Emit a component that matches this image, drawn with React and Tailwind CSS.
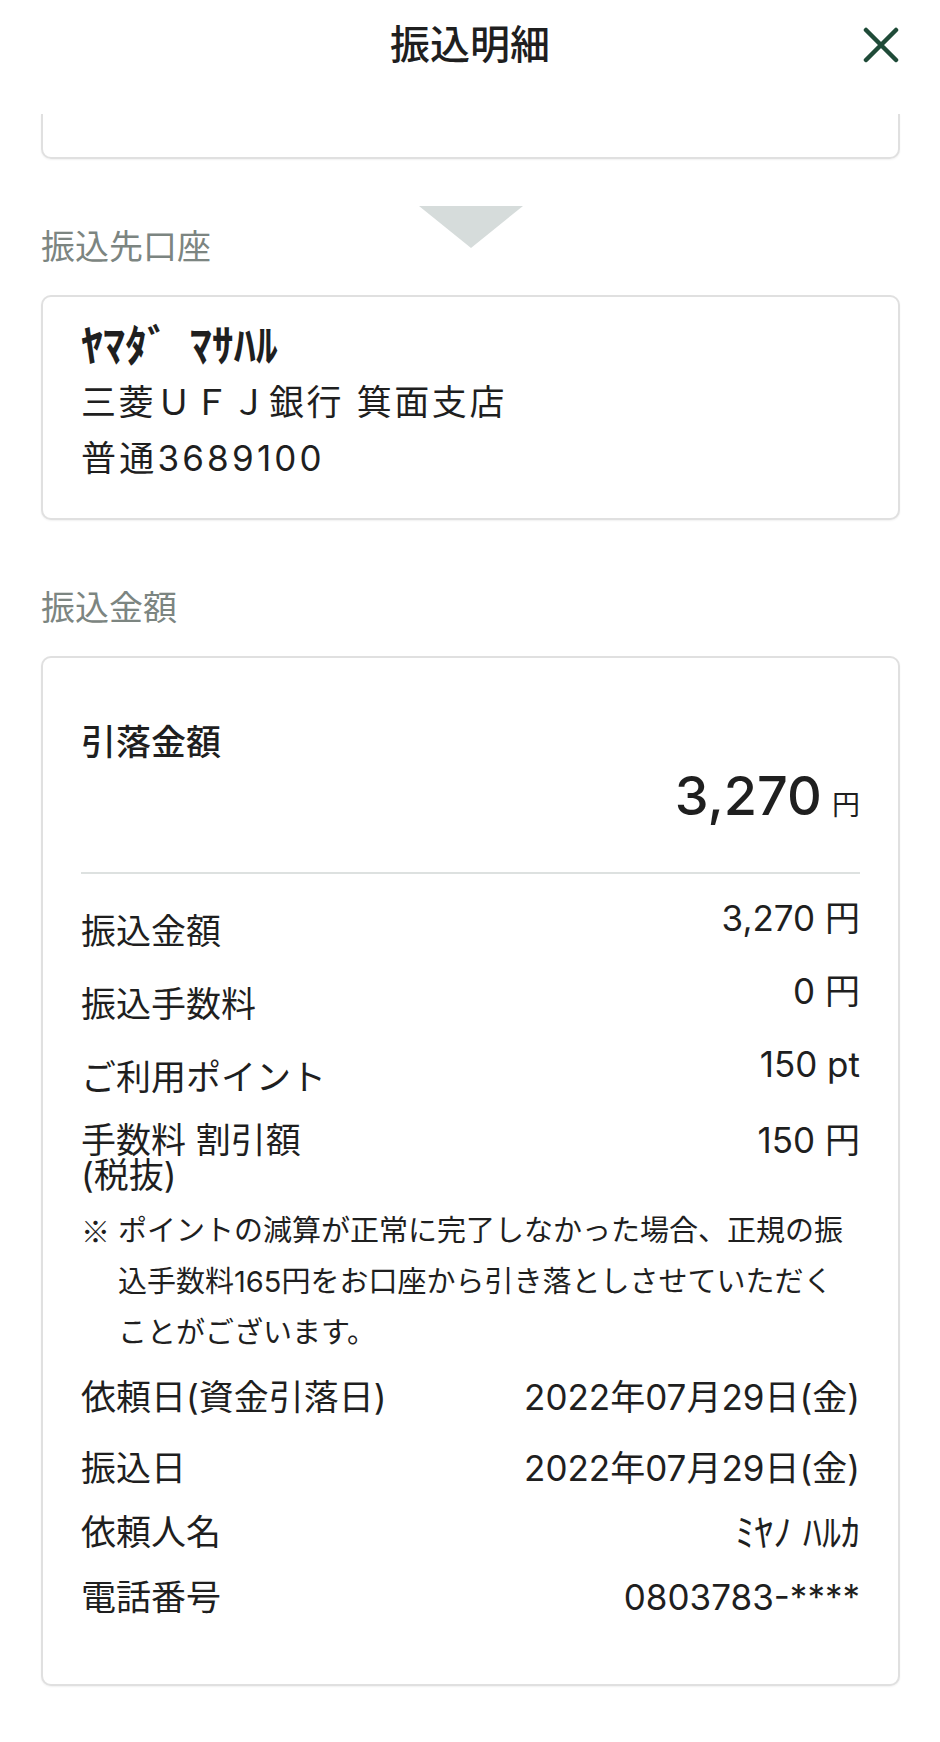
const rows = [
  { label: "振込金額", value: "3,270 円", mt: "mt-[20px]" },
  { label: "振込手数料", value: "0 円", mt: "mt-[12px]" },
  { label: "ご利用ポイント", value: "150 pt", mt: "mt-[12px]" },
];

const infoRows = [
  { label: "依頼日(資金引落日)", value: "2022年07月29日(金)", mt: "mt-[15px]" },
  { label: "振込日", value: "2022年07月29日(金)", mt: "mt-[23px]" },
  { label: "依頼人名", value: "ﾐﾔﾉ ﾊﾙｶ", mt: "mt-[16px]", kana: true },
  { label: "電話番号", value: "0803783-****", mt: "mt-[17px]" },
];

function Card({ className = "", children }) {
  return (
    <div
      className={`rounded-[10px] border-2 border-[#e0e0e0] bg-white shadow-[0_1px_2px_rgba(0,0,0,0.06)] ${className}`}
    >
      {children}
    </div>
  );
}

function SectionLabel({ children }) {
  return <h2 className="text-[34px] leading-[48px] text-[#7c8581]">{children}</h2>;
}

function AmountRow({ label, value, mt }) {
  return (
    <div className={`flex items-start justify-between ${mt}`}>
      <span className="mt-[13px] text-[35px] leading-[48px]">{label}</span>
      <span className="text-[35px] leading-[48px]">{value}</span>
    </div>
  );
}

function InfoRow({ label, value, mt, kana }) {
  return (
    <div className={`flex items-center justify-between ${mt}`}>
      <span className="text-[35px] leading-[48px]">{label}</span>
      <span className={`leading-[48px] ${kana ? "text-[38px]" : "text-[35px]"}`}>{value}</span>
    </div>
  );
}

export default function App() {
  return (
    <div className="min-h-screen bg-white pb-[55px] font-['Inter','Noto_Sans_CJK_JP',sans-serif] text-[#1f1f1f]">
      <header className="h-[114px]">
        <div className="relative flex h-[90px] items-center justify-center">
          <h1 className="text-[40px] font-medium leading-none">振込明細</h1>
          <button
            type="button"
            aria-label="閉じる"
            className="absolute right-[41px] top-1/2 -translate-y-1/2 text-[#1f4b38]"
          >
            <svg width="36" height="36" viewBox="0 0 36 36" fill="none" stroke="currentColor" strokeWidth="4.5" strokeLinecap="round">
              <path d="M3 3L33 33M33 3L3 33" />
            </svg>
          </button>
        </div>
      </header>

      <div className="ml-[41px] mr-[40px] h-[45px] rounded-b-[10px] border-2 border-t-0 border-[#e0e0e0] shadow-[0_1px_2px_rgba(0,0,0,0.06)]" />

      <section className="relative ml-[41px] mr-[40px] mt-[64px]">
        <svg className="absolute left-[378px] top-[-17px]" width="104" height="42" viewBox="0 0 104 42">
          <polygon points="0,0 104,0 52,42" fill="#d6dcdb" />
        </svg>
        <SectionLabel>振込先口座</SectionLabel>
        <Card className="mt-[24px] px-[38px] pb-[32px] pt-[21px]">
          <p className="text-[44px] font-bold leading-[56px]">ﾔﾏﾀﾞ&nbsp; ﾏｻﾊﾙ</p>
          <p className="text-[35px] leading-[56px] tracking-[2.6px]">三菱ＵＦＪ銀行 箕面支店</p>
          <p className="text-[35px] leading-[56px] tracking-[3.2px]">普通3689100</p>
        </Card>
      </section>

      <section className="ml-[41px] mr-[40px] mt-[64px]">
        <SectionLabel>振込金額</SectionLabel>
        <Card className="mt-[24px] px-[38px] pb-[63px] pt-[60px]">
          <p className="text-[35px] font-medium leading-[48px]">引落金額</p>
          <div className="flex items-baseline justify-end">
            <span className="text-[54px] font-medium leading-[60px]">3,270</span>
            <span className="ml-[10px] text-[28px] leading-[60px]">円</span>
          </div>
          <div className="mt-[37px] h-[2px] bg-[#dde1e0]" />

          {rows.map((row) => (
            <AmountRow key={row.label} {...row} />
          ))}

          <div className="mt-[22px] flex items-start justify-between">
            <div className="text-[35px] leading-[35px]">
              <p>手数料 割引額</p>
              <p>(税抜)</p>
            </div>
            <span className="text-[35px] leading-[35px]">150 円</span>
          </div>

          <div className="mt-[12px] flex text-[29px] leading-[51px]">
            <span className="w-[37px] shrink-0 font-['Noto_Sans_CJK_JP',sans-serif]">※</span>
            <p>
              ポイントの減算が正常に完了しなかった場合、正規の振
              <br />
              込手数料165円をお口座から引き落としさせていただく
              <br />
              ことがございます。
            </p>
          </div>

          {infoRows.map((row) => (
            <InfoRow key={row.label} {...row} />
          ))}
        </Card>
      </section>
    </div>
  );
}
